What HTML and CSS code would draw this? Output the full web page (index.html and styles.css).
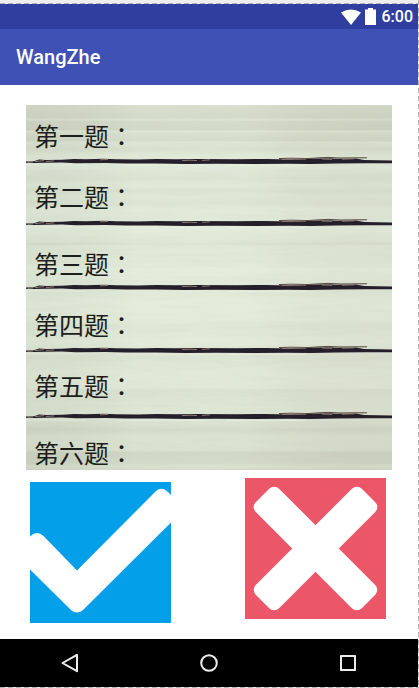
FILE: index.html
```html
<!DOCTYPE html>
<html lang="zh-CN">
<head>
<meta charset="utf-8">
<meta name="viewport" content="width=device-width, initial-scale=1">
<title>WangZhe</title>
<link rel="stylesheet" href="styles.css">
</head>
<body>
<div class="device">
  <div class="status">
    <svg width="20" height="16" viewBox="0 0 20 16" aria-hidden="true"><path d="M0 3.6Q10-2.8 20 3.6L10 16Z" fill="#fff"/></svg>
    <svg width="11" height="17" viewBox="0 0 11 17" aria-hidden="true"><path d="M3 0h5v1.500h3V17H0V1.500h3Z" fill="#fff"/></svg>
    <time>6:00</time>
  </div>
  <header class="appbar"><h1>WangZhe</h1></header>
  <main>
    <section class="board">
      <svg class="wood" viewBox="0 0 366 365" preserveAspectRatio="none" aria-hidden="true">
        <defs>
          <linearGradient id="planks" x1="0" y1="0" x2="0" y2="1">
            <stop offset="0" stop-color="#d4d9c8"/>
            <stop offset=".035" stop-color="#cfd3c3"/>
            <stop offset=".04" stop-color="#dbe0d0"/>
            <stop offset=".045" stop-color="#d0d4c4"/>
            <stop offset=".067" stop-color="#cdd1c1"/>
            <stop offset=".072" stop-color="#dce2d1"/>
            <stop offset=".08" stop-color="#d4d9c9"/>
            <stop offset=".097" stop-color="#d0d5c4"/>
            <stop offset=".102" stop-color="#dce2d2"/>
            <stop offset=".12" stop-color="#d5dbca"/>
            <stop offset=".14" stop-color="#e0e7d7"/>
            <stop offset=".17" stop-color="#dfe8da"/>
            <stop offset=".2" stop-color="#d8dfcf"/>
            <stop offset=".22" stop-color="#dfe6d6"/>
            <stop offset=".235" stop-color="#d7decd"/>
            <stop offset=".25" stop-color="#dee5d5"/>
            <stop offset=".27" stop-color="#dae0d0"/>
            <stop offset=".285" stop-color="#e1e9da"/>
            <stop offset=".31" stop-color="#dfe6d7"/>
            <stop offset=".34" stop-color="#e3ebdd"/>
            <stop offset=".375" stop-color="#dde4d4"/>
            <stop offset=".38" stop-color="#d7ddcd"/>
            <stop offset=".388" stop-color="#dfe6d6"/>
            <stop offset=".43" stop-color="#dfe6d6"/>
            <stop offset=".45" stop-color="#e4ecdd"/>
            <stop offset=".505" stop-color="#dee5d5"/>
            <stop offset=".54" stop-color="#e3ebdc"/>
            <stop offset=".59" stop-color="#e2e9da"/>
            <stop offset=".605" stop-color="#dce3d3"/>
            <stop offset=".65" stop-color="#e2e9da"/>
            <stop offset=".69" stop-color="#d9dfcf"/>
            <stop offset=".73" stop-color="#dfe6d6"/>
            <stop offset=".775" stop-color="#dfe5d5"/>
            <stop offset=".782" stop-color="#d7ddcd"/>
            <stop offset=".83" stop-color="#dbe2d2"/>
            <stop offset=".86" stop-color="#dbe1d1"/>
            <stop offset=".89" stop-color="#cfd4c4"/>
            <stop offset=".91" stop-color="#d8decd"/>
            <stop offset=".945" stop-color="#d6dccb"/>
            <stop offset=".952" stop-color="#ccd0c1"/>
            <stop offset=".98" stop-color="#cdd2c2"/>
            <stop offset=".99" stop-color="#d7dccb"/>
            <stop offset="1" stop-color="#cfd4c4"/>
          </linearGradient>
          <linearGradient id="tone">
            <stop offset="0" stop-color="#a9b8a6" stop-opacity=".12"/>
            <stop offset=".3" stop-color="#e6f2de" stop-opacity=".25"/>
            <stop offset=".6" stop-color="#e6f2de" stop-opacity=".25"/>
            <stop offset="1" stop-color="#b9b59c" stop-opacity=".08"/>
          </linearGradient>
          <filter id="grain" x="0" y="0" width="100%" height="100%">
            <feTurbulence type="fractalNoise" baseFrequency=".02 .25" numOctaves="3" seed="8"/>
            <feColorMatrix values="0 0 0 0 .5  0 0 0 0 .52  0 0 0 0 .42  .5 0 0 0 -.2"/>
          </filter>
          <g id="stroke">
            <path d="M0 5.500L8 5.200 13 3.500 20 4 36 3.800 48 3 60 3.300 78 2.800 90 3.300 112 3.400 130 3 150 3.200 170 3 210 3.200 240 3 252 3.200 280 3 292 2.400 304 2.200 310 2.800 330 2.400 338 4 366 4.400V7.200H340L310 7.600 285 8 262 7.800 230 8 190 7.700 160 8 130 7.600 100 7.600 80 7 50 7.200 36 6.600 20 6.800 8 7 0 6.800Z" fill="#241f2a"/>
            <path d="M253 2.600L265 2.200 282 2.600 290 2l12-.6 12 .6 18-.2h9" fill="none" stroke="#54463f" stroke-width="1"/>
            <path d="M2 6.200l5-.3M9 5.600l9-1M20 5.500l8-.6M74 3.800l8-.4M156 4.600l8-.4 7 .4M176 4.400l8-.6M256 3.400l24-.2M296 3l10 .4M316 3.200l12-.4" fill="none" stroke="#a68f82" stroke-width=".8"/>
            <path d="M0 9h60M90 9.200h90M200 9.400h80" stroke="#edf1e4" stroke-width=".8" opacity=".7"/>
          </g>
        </defs>
        <rect width="366" height="365" fill="url(#planks)"/>
        <rect width="366" height="365" fill="url(#tone)"/>
        <rect width="366" height="365" filter="url(#grain)" opacity=".4"/>
        <use href="#stroke" y="51"/>
        <use href="#stroke" y="113"/>
        <use href="#stroke" y="177"/>
        <use href="#stroke" y="240"/>
        <use href="#stroke" y="306"/>
      </svg>
      <ol class="questions">
        <li>第一题<span lang="zh-TW">：</span></li>
        <li>第二题<span lang="zh-TW">：</span></li>
        <li class="spaced">第三题<span lang="zh-TW">：</span></li>
        <li>第四题<span lang="zh-TW">：</span></li>
        <li>第五题<span lang="zh-TW">：</span></li>
        <li class="spaced">第六题<span lang="zh-TW">：</span></li>
      </ol>
    </section>
    <div class="answers">
      <button class="answer right" type="button" aria-label="对">
        <svg viewBox="0 0 141 141" aria-hidden="true"><path d="M0 54.500Q7 48 13.500 54L47 88.500 126 9Q132 4 138 10L141 13V40.500L53 128Q47 133 41 128L0 87.500Z" fill="#fff"/></svg>
      </button>
      <button class="answer wrong" type="button" aria-label="错">
        <svg viewBox="0 0 141 141" aria-hidden="true"><g fill="#fff" transform="rotate(45 70.500 70.500)"><rect x="-4.500" y="54" width="150" height="33" rx="7"/><rect x="54" y="-4.500" width="33" height="150" rx="7"/></g></svg>
      </button>
    </div>
  </main>
  <nav class="navbar">
    <button type="button" aria-label="返回"><svg width="20" height="20" viewBox="0 0 20 20" aria-hidden="true"><path d="M17 1.800V18.200L2.500 10Z"/></svg></button>
    <button type="button" aria-label="主页"><svg width="20" height="20" viewBox="0 0 20 20" aria-hidden="true"><circle cx="10" cy="10" r="7.800"/></svg></button>
    <button type="button" aria-label="最近"><svg width="20" height="20" viewBox="0 0 20 20" aria-hidden="true"><rect x="3" y="3" width="14" height="14"/></svg></button>
  </nav>
</div>
</body>
</html>
```
FILE: styles.css
```css
* { box-sizing: border-box; }

body {
  margin: 0;
  background: #eee;
  font-family: Roboto, "Noto Sans CJK SC", sans-serif;
}

.device {
  display: flex;
  flex-direction: column;
  min-height: 100vh;
  padding: 4px 1px 1px 0;
  background:
    repeating-linear-gradient(90deg, #b4b4b4 0 5px, #eee 5px 8px) 0 3px / 100% 1px no-repeat,
    repeating-linear-gradient(90deg, #b4b4b4 0 5px, #eee 5px 8px) 0 100% / 100% 1px no-repeat,
    repeating-linear-gradient(#b4b4b4 0 5px, #fff 5px 8px) 100% 0 / 1px 100% no-repeat,
    #eee;
}

.status {
  display: flex;
  align-items: center;
  justify-content: flex-end;
  gap: 4px;
  height: 25px;
  padding-right: 5px;
  background: #303f9f;
  color: #fff;
}

.status time {
  margin-left: 2px;
  font-size: 16px;
  font-weight: 500;
  line-height: 25px;
}

.appbar {
  padding: 0 16px;
  background: #3f51b5;
  color: #fff;
}

.appbar h1 {
  margin: 0;
  font-size: 20px;
  font-weight: 500;
  line-height: 56px;
}

main {
  flex: 1;
  padding: 20px 26px 16px;
  background: #fff;
}

.board { display: grid; }

.wood,
.questions { grid-area: 1 / 1; }

.wood {
  display: block;
  width: 100%;
  height: 365px;
}

.questions {
  z-index: 1;
  margin: 0;
  padding: 14px 8px 0;
  list-style: none;
  color: #1c1e1b;
  font-family: "Noto Sans CJK SC", sans-serif;
  font-size: 25px;
  line-height: 32px;
}

.questions li { margin-bottom: 29px; }
.questions .spaced { margin-top: 35px; }
.questions li:last-child { margin-bottom: 0; }

.questions span { font-family: "Noto Sans CJK TC", sans-serif; }

.answers {
  display: flex;
  justify-content: space-between;
  padding: 8px 6px 0 4px;
}

.answer {
  width: 141px;
  height: 141px;
  padding: 0;
  border: 0;
}

.answer svg { display: block; }
.right { margin-top: 4px; background: #039fe9; }
.wrong { background: #eb5768; }

.navbar {
  display: grid;
  grid-template-columns: repeat(3, 1fr);
  height: 48px;
  background: #000;
}

.navbar button {
  display: flex;
  align-items: center;
  justify-content: center;
  padding: 0;
  border: 0;
  background: none;
}

.navbar svg {
  fill: none;
  stroke: #eee;
  stroke-width: 2;
  stroke-linejoin: round;
}
```
